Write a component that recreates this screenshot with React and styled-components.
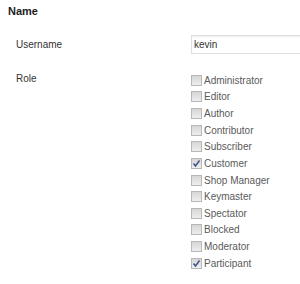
import styled, { createGlobalStyle } from 'styled-components';

const GlobalStyle = createGlobalStyle`
  html, body {
    margin: 0;
    padding: 0;
    background: #fff;
  }
  body {
    font-family: "Liberation Sans", Arial, sans-serif;
    color: #333;
    overflow: hidden;
  }
`;

const Page = styled.div`
  padding: 4px 0 0 8px;
  overflow: hidden;
  width: 292px;
`;

const Heading = styled.h3`
  margin: 0;
  font-size: 11px;
  line-height: 14px;
  font-weight: bold;
  color: #222;
`;

const FormTable = styled.div`
  display: grid;
  grid-template-columns: 175px minmax(0, 1fr);
  row-gap: 18px;
  padding-left: 8px;
  margin-top: 17px;
`;

const Label = styled.div`
  font-size: 10px;
  line-height: 12px;
  color: #333;
  align-self: ${p => (p.$top ? 'start' : 'center')};
  padding-top: ${p => (p.$top ? '1px' : '0')};
`;

const TextInput = styled.input`
  box-sizing: border-box;
  width: 260px;
  height: 19px;
  margin: 0;
  padding: 0 2px;
  border: 1px solid #dfdfdf;
  box-shadow: inset 0 1px 2px rgba(0, 0, 0, 0.07);
  font-family: inherit;
  font-size: 10px;
  color: #333;
  background: #fff;
  outline: none;
`;

const RoleList = styled.div`
  display: grid;
  grid-auto-rows: 16.64px;
`;

const RoleItem = styled.label`
  display: flex;
  align-items: center;
  gap: 2px;
  font-size: 10px;
  color: #5a5a5a;
  white-space: nowrap;
`;

const Box = styled.span`
  box-sizing: border-box;
  width: 11px;
  height: 11px;
  border: 1px solid #b8b8b8;
  background: linear-gradient(#d6d6d6, #eeeeee);
  display: flex;
  align-items: center;
  justify-content: center;
`;

const roles = [
  ['Administrator', false],
  ['Editor', false],
  ['Author', false],
  ['Contributor', false],
  ['Subscriber', false],
  ['Customer', true],
  ['Shop Manager', false],
  ['Keymaster', false],
  ['Spectator', false],
  ['Blocked', false],
  ['Moderator', false],
  ['Participant', true],
];

const Check = () => (
  <svg width="9" height="9" viewBox="0 0 9 9">
    <path d="M1.5 4.5 L3.5 7 L7.5 1.5" fill="none" stroke="#3a4f8a" strokeWidth="1.4" />
  </svg>
);

export default function App() {
  return (
    <Page>
      <GlobalStyle />
      <Heading>Name</Heading>
      <FormTable>
        <Label>Username</Label>
        <TextInput defaultValue="kevin" />
        <Label $top>Role</Label>
        <RoleList>
          {roles.map(([name, checked]) => (
            <RoleItem key={name}>
              <Box>{checked && <Check />}</Box>
              {name}
            </RoleItem>
          ))}
        </RoleList>
      </FormTable>
    </Page>
  );
}
